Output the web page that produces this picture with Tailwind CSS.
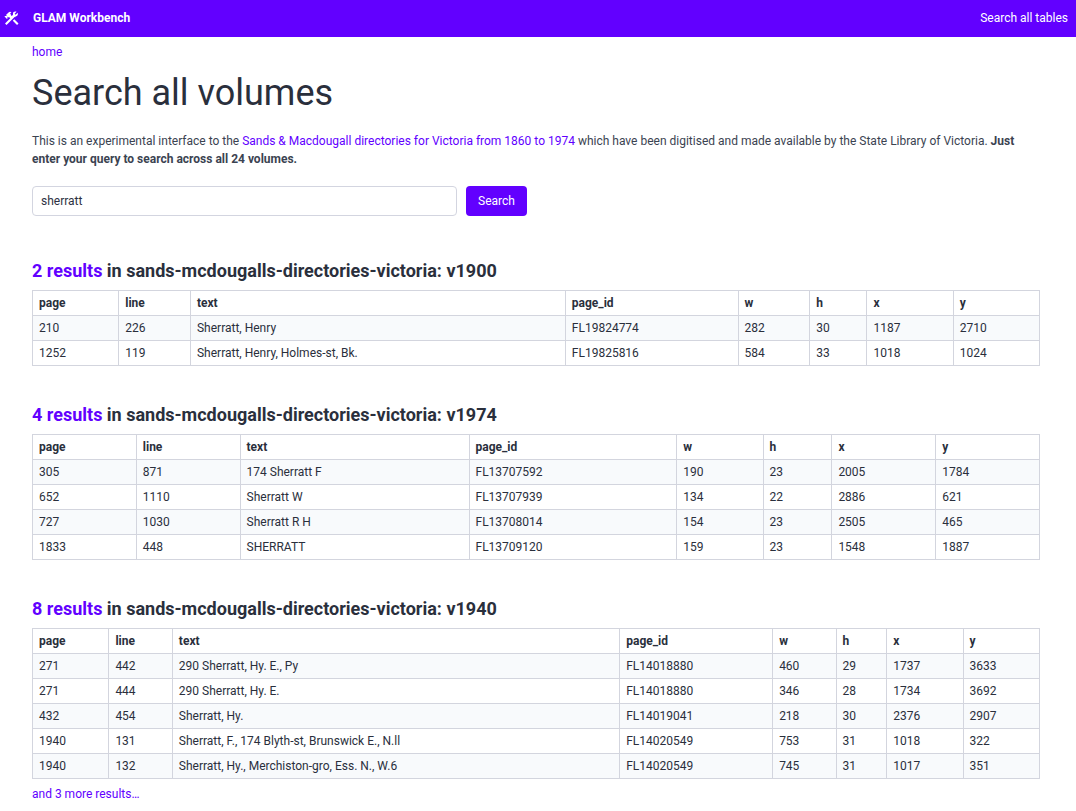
<!DOCTYPE html>
<html lang="en">
<head>
  <meta charset="UTF-8" />
  <meta name="viewport" content="width=device-width, initial-scale=1.0" />
  <title>Search all volumes</title>

  <script src="https://cdn.jsdelivr.net/npm/@tailwindcss/browser@4"></script>
</head>
<body class="bg-white font-['Roboto',sans-serif] text-[12px] leading-[18px] text-[#3b4351]">

  <header class="flex items-center justify-between bg-[#6200ff] border-b border-[#6200ff] h-[37px] pl-[3px] pr-2 text-white">
    <a href="/" class="flex items-center gap-[13px] font-bold">
      <svg class="w-[17px] h-[17px]" viewBox="0 0 24 24" fill="currentColor" aria-hidden="true"><path d="m13.78 15.3 6 6 2.11-2.16-6-6-2.11 2.16m3.72-5.2c-.39 0-.81-.05-1.14-.19L4.97 21.25l-2.11-2.11 7.41-7.4L8.5 9.96l-.72.7-1.45-1.41v2.86l-.7.7-3.52-3.56.7-.7h2.81l-1.4-1.41 3.56-3.56a2.976 2.976 0 0 1 4.22 0L9.89 4.74l1.41 1.4-.71.71 1.79 1.78 1.82-1.88c-.14-.33-.2-.75-.2-1.12a3.49 3.49 0 0 1 3.5-3.52c.59 0 1.11.14 1.58.42L16.41 5.2l1.5 1.5 2.67-2.67c.28.47.42.97.42 1.6 0 1.92-1.55 3.47-3.5 3.47Z" /></svg>
      GLAM Workbench
    </a>
    <a href="/search">Search all tables</a>
  </header>

  <main class="pl-8 pr-9 pt-1.5">
    <nav><a href="/" class="text-[#6200ff]">home</a></nav>

    <h1 class="mt-[9px] mb-4 text-[36px] leading-[46px] text-[#2a2f3c]">Search all volumes</h1>

    <p>This is an experimental interface to the <a href="#" class="text-[#6200ff]">Sands &amp; Macdougall directories for Victoria from 1860 to 1974</a> which have been digitised and made available by the State Library of Victoria. <strong>Just enter your query to search across all 24 volumes.</strong></p>

    <form class="flex gap-[9px] mt-4.5" action="/search">
      <input name="q" type="text" value="sherratt" aria-label="Search query" class="w-[425px] h-[30px] px-2 border border-[#d3d5e0] rounded text-[#2d3142] focus:outline-none" />
      <button type="submit" class="h-[30px] px-3 bg-[#6200ff] text-white rounded">Search</button>
    </form>

    <div id="results"></div>
  </main>

  <script>
    const columns = ['page', 'line', 'text', 'page_id', 'w', 'h', 'x', 'y'];

    const volumes = [
      { name: 'v1900', count: 2, rows: [
        [210, 226, 'Sherratt, Henry', 'FL19824774', 282, 30, 1187, 2710],
        [1252, 119, 'Sherratt, Henry, Holmes-st, Bk.', 'FL19825816', 584, 33, 1018, 1024],
      ] },
      { name: 'v1974', count: 4, rows: [
        [305, 871, '174 Sherratt F', 'FL13707592', 190, 23, 2005, 1784],
        [652, 1110, 'Sherratt W', 'FL13707939', 134, 22, 2886, 621],
        [727, 1030, 'Sherratt R H', 'FL13708014', 154, 23, 2505, 465],
        [1833, 448, 'SHERRATT', 'FL13709120', 159, 23, 1548, 1887],
      ] },
      { name: 'v1940', count: 8, rows: [
        [271, 442, '290 Sherratt, Hy. E., Py', 'FL14018880', 460, 29, 1737, 3633],
        [271, 444, '290 Sherratt, Hy. E.', 'FL14018880', 346, 28, 1734, 3692],
        [432, 454, 'Sherratt, Hy.', 'FL14019041', 218, 30, 2376, 2907],
        [1940, 131, 'Sherratt, F., 174 Blyth-st, Brunswick E., N.ll', 'FL14020549', 753, 31, 1018, 322],
        [1940, 132, 'Sherratt, Hy., Merchiston-gro, Ess. N., W.6', 'FL14020549', 745, 31, 1017, 351],
      ] },
    ];

    const cell = (tag, value) => `<${tag} class="border border-[#d3d5de] px-1.5 py-[3px] text-left">${value}</${tag}>`;

    document.getElementById('results').innerHTML = volumes.map((v) => {
      const more = v.count - v.rows.length;
      return `
        <section class="mt-[35px] first:mt-[41px]">
          <h2 class="mb-1.5 text-[18px] leading-[27px] font-bold text-[#2a2f3c]"><a href="#" class="text-[#6200ff]">${v.count} results</a> in sands-mcdougalls-directories-victoria: ${v.name}</h2>
          <table class="w-full border-collapse text-[#2a2f3c]">
            <thead><tr>${columns.map((c) => cell('th', c)).join('')}</tr></thead>
            <tbody>${v.rows.map((r) => `<tr class="odd:bg-[#f8fafc]">${r.map((c) => cell('td', c)).join('')}</tr>`).join('')}</tbody>
          </table>
          ${more > 0 ? `<p class="mt-1.5"><a href="#" class="text-[#6200ff]">and ${more} more results…</a></p>` : ''}
        </section>`;
    }).join('');
  </script>

</body>
</html>
